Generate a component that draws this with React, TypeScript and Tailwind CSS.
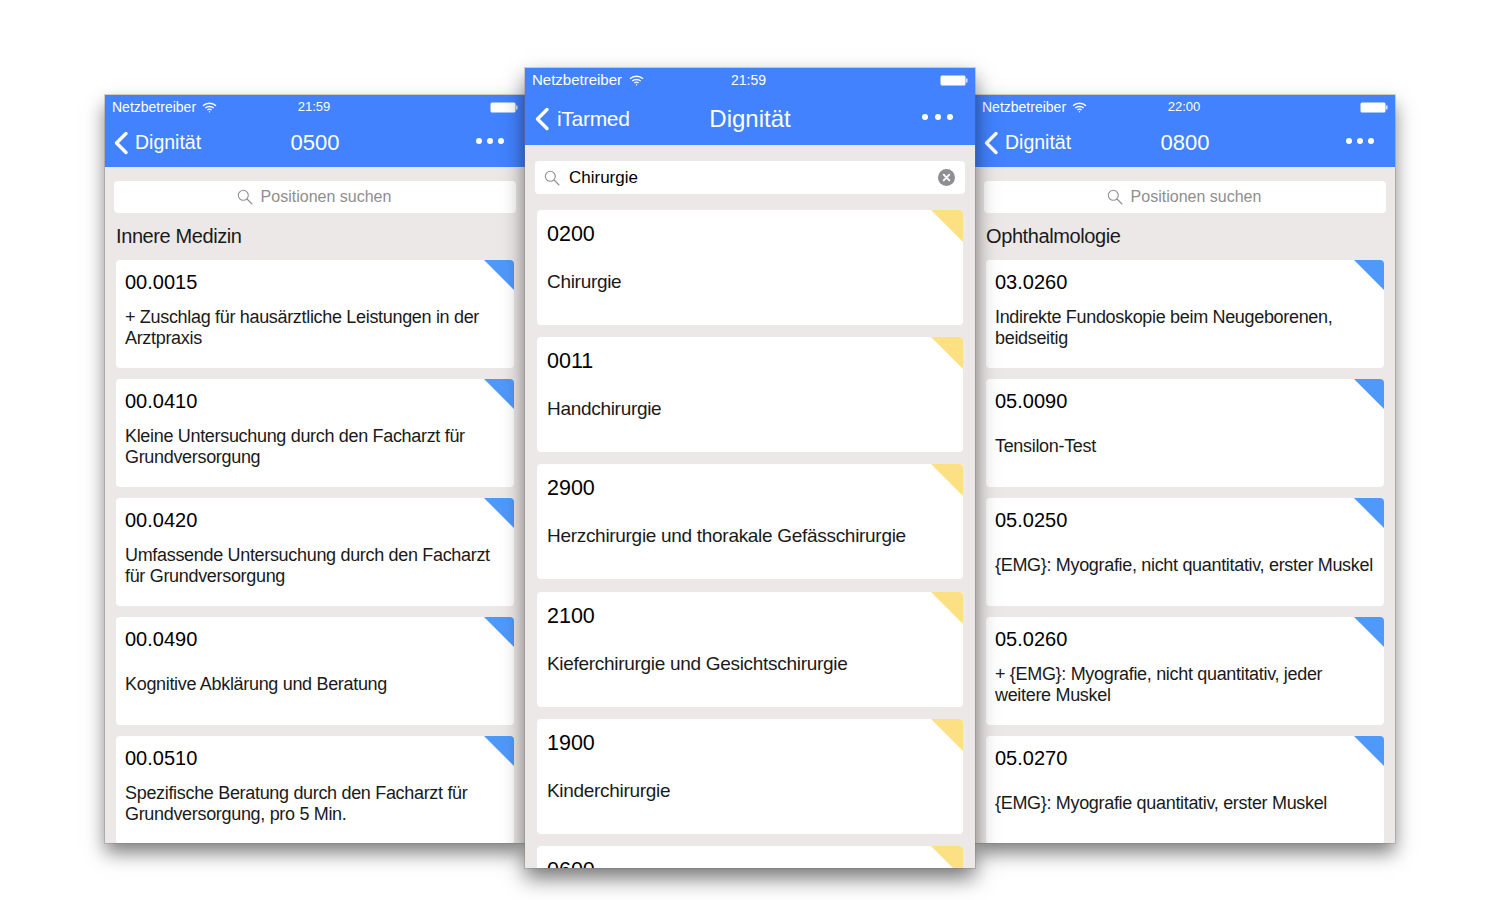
const font = { fontFamily: '"Liberation Sans", Arial, sans-serif' };

const leftRows = [
  ["00.0015", "+ Zuschlag für hausärztliche Leistungen in der Arztpraxis"],
  ["00.0410", "Kleine Untersuchung durch den Facharzt für Grundversorgung"],
  ["00.0420", "Umfassende Untersuchung durch den Facharzt für Grundversorgung"],
  ["00.0490", "Kognitive Abklärung und Beratung"],
  ["00.0510", "Spezifische Beratung durch den Facharzt für Grundversorgung, pro 5 Min."],
];

const rightRows = [
  ["03.0260", "Indirekte Fundoskopie beim Neugeborenen, beidseitig"],
  ["05.0090", "Tensilon-Test"],
  ["05.0250", "{EMG}: Myografie, nicht quantitativ, erster Muskel"],
  ["05.0260", "+ {EMG}: Myografie, nicht quantitativ, jeder weitere Muskel"],
  ["05.0270", "{EMG}: Myografie quantitativ, erster Muskel"],
];

const centerRows = [
  ["0200", "Chirurgie"],
  ["0011", "Handchirurgie"],
  ["2900", "Herzchirurgie und thorakale Gefässchirurgie"],
  ["2100", "Kieferchirurgie und Gesichtschirurgie"],
  ["1900", "Kinderchirurgie"],
  ["0600", ""],
];

const Wifi = () => (
  <svg width="15" height="11" viewBox="0 0 15 11" fill="none" stroke="white" strokeWidth="1.4">
    <path d="M1 3.8C4.6 .4 10.4 .4 14 3.8" />
    <path d="M3.3 6C5.6 3.9 9.4 3.9 11.7 6" />
    <path d="M5.4 8.1C6.6 7 8.4 7 9.6 8.1" />
    <circle cx="7.5" cy="9.8" r="0.7" fill="white" stroke="none" />
  </svg>
);

const Battery = () => (
  <svg width="28" height="11" viewBox="0 0 28 11">
    <rect x="0.5" y="0.5" width="25" height="10" rx="1.5" fill="white" />
    <rect x="26" y="3.5" width="1.5" height="4" fill="white" opacity="0.8" />
  </svg>
);

const Chevron = () => (
  <svg width="16" height="24" viewBox="0 0 16 24" fill="none" stroke="white" strokeWidth="3.4" strokeLinecap="round" strokeLinejoin="round">
    <path d="M13 2.5L3.5 12L13 21.5" />
  </svg>
);

const Dots = ({ big }: { big?: boolean }) => (
  <div className={big ? "-mt-[3px] flex gap-[6.5px]" : "-mt-[3px] flex gap-[5px]"}>
    <span className="h-[6px] w-[6px] rounded-full bg-white" />
    <span className="h-[6px] w-[6px] rounded-full bg-white" />
    <span className="h-[6px] w-[6px] rounded-full bg-white" />
  </div>
);

const SearchIcon = () => (
  <svg width="16" height="16" viewBox="0 0 16 16" fill="none" stroke="#8e8e8e" strokeWidth="1.1" strokeLinecap="round">
    <circle cx="6.3" cy="6.3" r="5" />
    <path d="M10 10L15 15" />
  </svg>
);

const ClearIcon = () => (
  <svg width="17" height="17" viewBox="0 0 17 17">
    <circle cx="8.5" cy="8.5" r="8.5" fill="#8e8e93" />
    <path d="M5.7 5.7L11.3 11.3M11.3 5.7L5.7 11.3" stroke="white" strokeWidth="1.9" strokeLinecap="round" />
  </svg>
);

const Corner = ({ color, size }: { color: string; size: number }) => (
  <svg className="absolute right-0 top-0" width={size} height={size} viewBox="0 0 10 10">
    <path d="M0 0H10V10Z" fill={color} />
  </svg>
);

const SidePhone = ({ title, heading, time, rows }: { title: string; heading: string; time: string; rows: string[][] }) => (
  <div className="mt-[27px] flex h-[748px] w-[420px] flex-col overflow-hidden bg-[#ebe8e7] shadow-[0_0_0_1px_rgba(120,120,120,0.3),0_10px_18px_rgba(0,0,0,0.5)]">
    <div className="h-[72px] shrink-0 bg-[#4282ff] text-white">
      <div className="relative flex h-[24px] items-center px-[7px] text-[14px]">
        <span>Netzbetreiber</span>
        <span className="ml-[6px] flex"><Wifi /></span>
        <span className="absolute left-0 right-[2px] text-center text-[13px] font-medium">{time}</span>
        <span className="ml-auto flex"><Battery /></span>
      </div>
      <div className="relative flex h-[47px] items-center pl-[8px] pr-[21px]">
        <Chevron />
        <span className="ml-[6px] text-[19.5px]">Dignität</span>
        <span className="absolute left-0 right-0 text-center text-[22px]">{title}</span>
        <span className="ml-auto"><Dots /></span>
      </div>
    </div>
    <div className="mx-[9px] mt-[14px] flex h-[32px] shrink-0 items-center justify-center gap-[8px] rounded-[4px] bg-white pr-[2px] text-[16px] text-[#8e8e8e]">
      <SearchIcon />
      <span>Positionen suchen</span>
    </div>
    <div className="ml-[11px] mt-[11px] h-[25px] shrink-0 text-[20px] leading-[25px] tracking-[-0.4px] text-[#1a1a1a]">{heading}</div>
    <div className="mx-[11px] mt-[11px] flex flex-col gap-[11px]">
      {rows.map((row) => (
        <div key={row[0]} className="relative h-[108px] shrink-0 overflow-hidden rounded-[4px] bg-white">
          <Corner color="#4f99fb" size={30} />
          <div className="absolute left-[9px] top-[10px] text-[20px] leading-[24px] text-black">{row[0]}</div>
          <div className="absolute bottom-[8px] left-[9px] right-[9px] top-[35px] flex items-center text-[18px] leading-[21px] tracking-[-0.32px] text-[#1a1a1a]">
            <div>{row[1]}</div>
          </div>
        </div>
      ))}
    </div>
  </div>
);

const CenterPhone = () => (
  <div className="relative z-10 flex h-[800px] w-[450px] flex-col overflow-hidden bg-[#ebe8e7] shadow-[0_0_0_1px_rgba(120,120,120,0.3),0_10px_20px_rgba(0,0,0,0.55)]">
    <div className="h-[77px] shrink-0 bg-[#4282ff] text-white">
      <div className="relative flex h-[25px] items-center px-[7px] text-[15px]">
        <span>Netzbetreiber</span>
        <span className="ml-[7px] flex"><Wifi /></span>
        <span className="absolute left-0 right-[3px] text-center text-[14px] font-medium">21:59</span>
        <span className="ml-auto flex"><Battery /></span>
      </div>
      <div className="relative flex h-[51px] items-center pl-[9px] pr-[22px]">
        <Chevron />
        <span className="ml-[7px] text-[21px] tracking-[-0.3px]">iTarmed</span>
        <span className="absolute left-0 right-0 text-center text-[24px]">Dignität</span>
        <span className="ml-auto"><Dots big /></span>
      </div>
    </div>
    <div className="mx-[10px] mt-[16px] flex h-[33px] shrink-0 items-center rounded-[4px] bg-white pl-[9px] pr-[10px] text-[17px] text-black">
      <SearchIcon />
      <span className="ml-[9px]">Chirurgie</span>
      <span className="ml-auto flex"><ClearIcon /></span>
    </div>
    <div className="mx-[12px] mt-[16px] flex flex-col gap-[12.2px]">
      {centerRows.map((row) => (
        <div key={row[0]} className="relative h-[115px] shrink-0 overflow-hidden rounded-[4px] bg-white">
          <Corner color="#fde084" size={32} />
          <div className="absolute left-[10px] top-[11px] text-[21.5px] leading-[26px] text-black">{row[0]}</div>
          <div className="absolute left-[10px] top-[60px] text-[19px] leading-[24px] tracking-[-0.3px] text-[#1a1a1a]">{row[1]}</div>
        </div>
      ))}
    </div>
  </div>
);

export default function App() {
  return (
    <div className="flex h-[900px] w-[1500px] justify-center overflow-hidden bg-white pt-[68px]" style={font}>
      <SidePhone title="0500" heading="Innere Medizin" time="21:59" rows={leftRows} />
      <CenterPhone />
      <SidePhone title="0800" heading="Ophthalmologie" time="22:00" rows={rightRows} />
    </div>
  );
}
